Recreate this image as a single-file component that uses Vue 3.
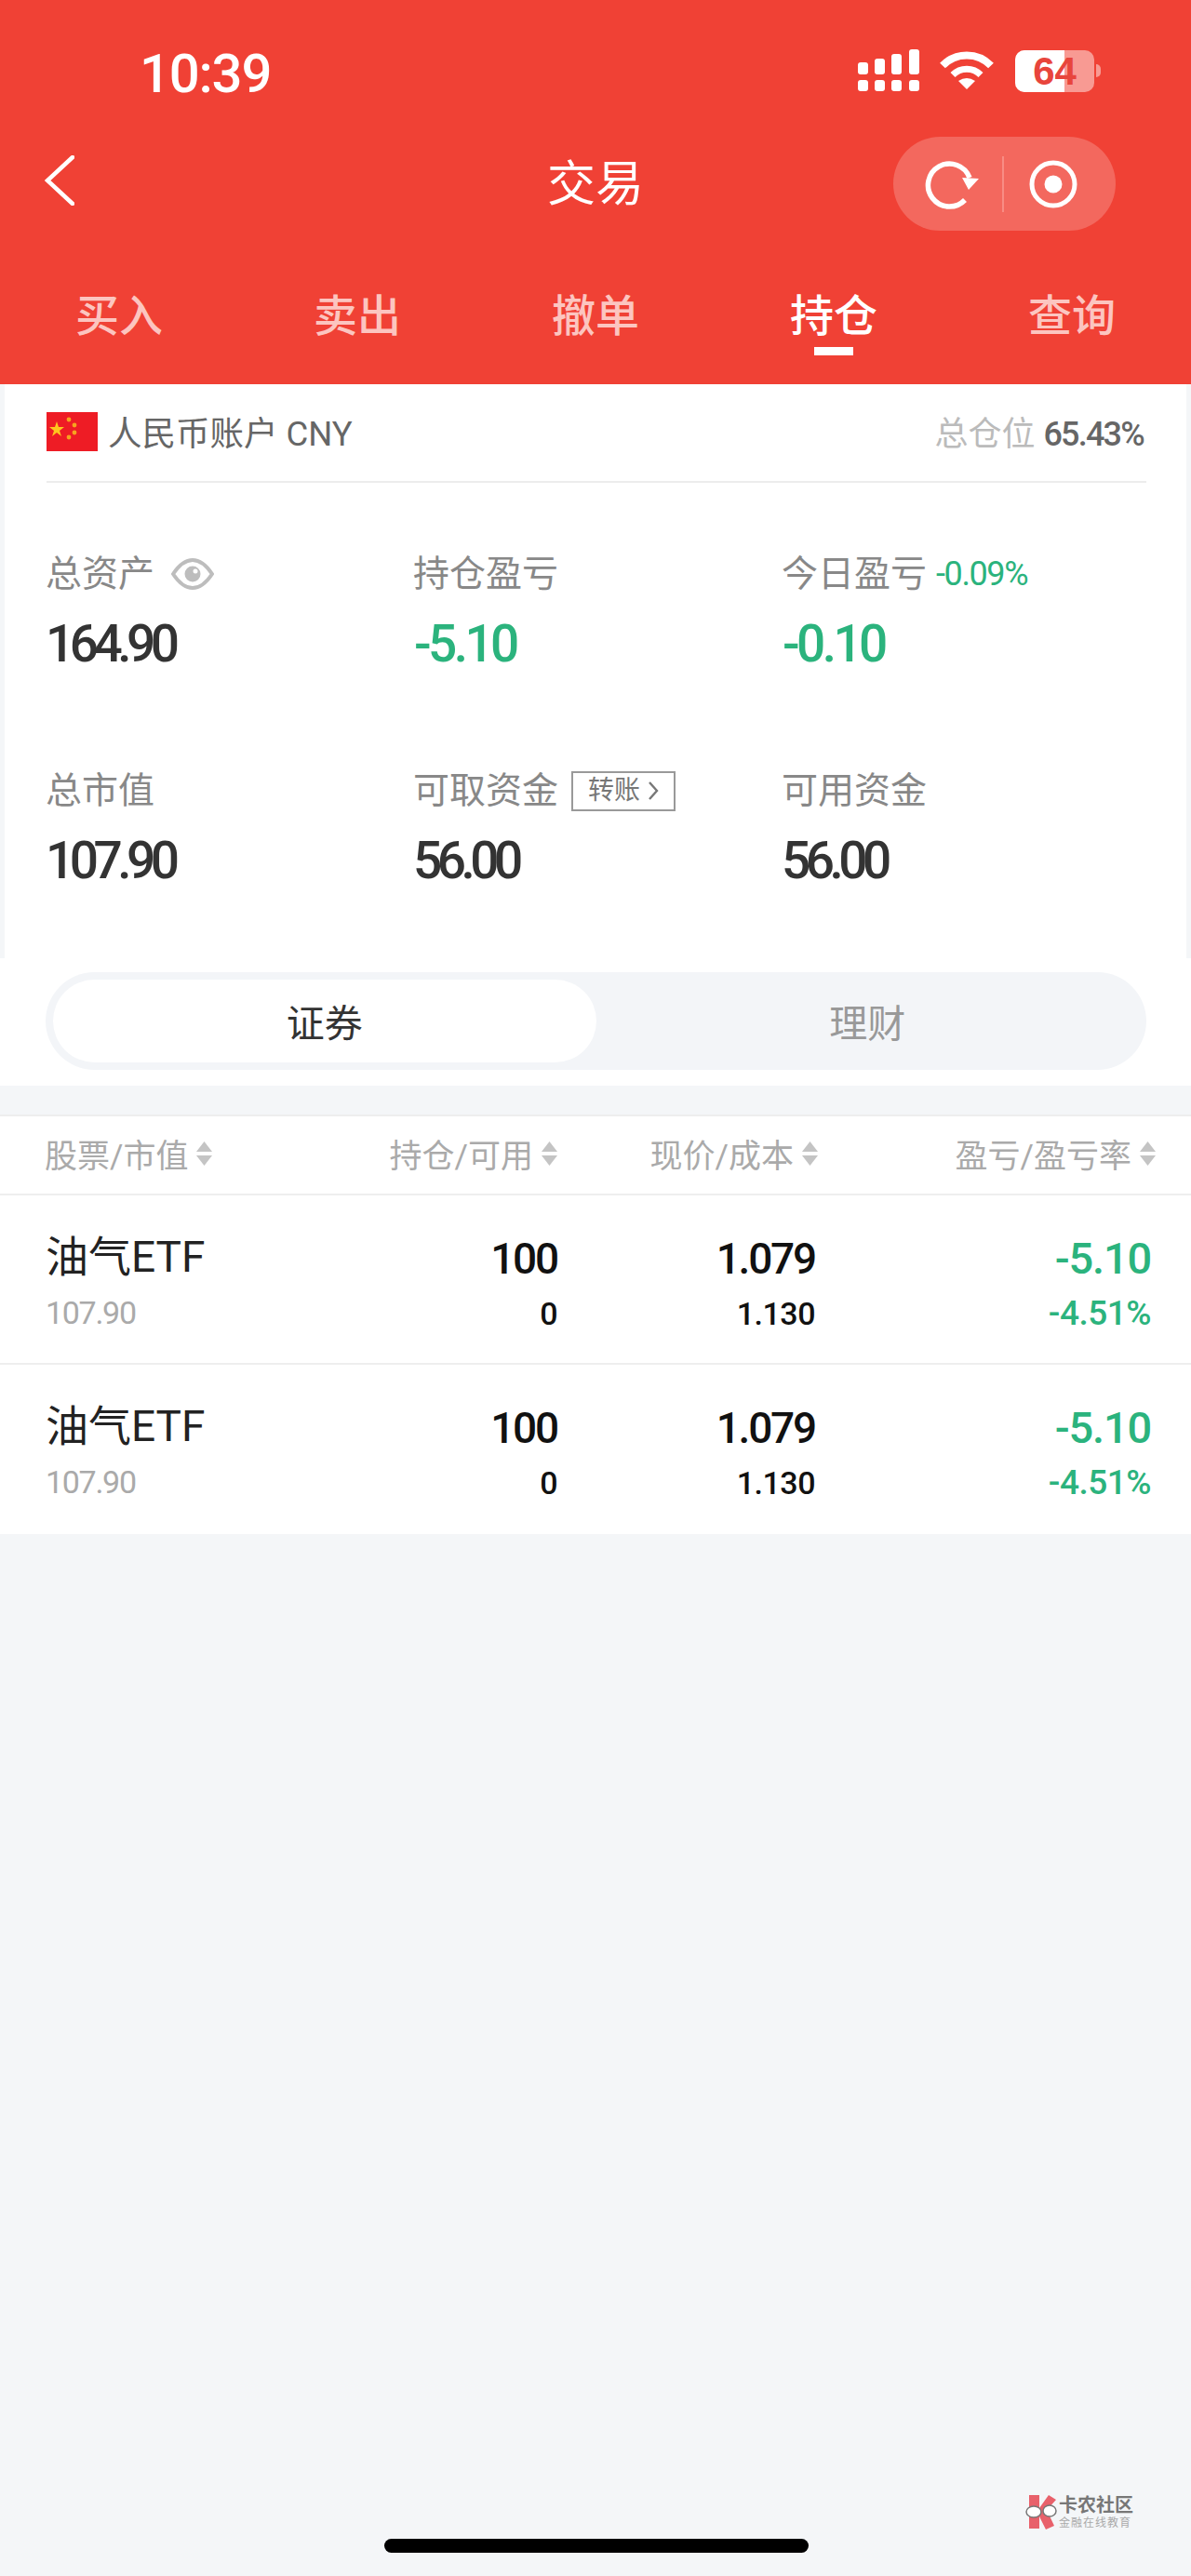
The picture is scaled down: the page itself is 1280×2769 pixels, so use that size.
<script setup>
const tabs = [
  { label: '买入' },
  { label: '卖出' },
  { label: '撤单' },
  { label: '持仓', active: true },
  { label: '查询' },
]
const stats = [
  { label: '总资产', value: '164.90', eye: true },
  { label: '持仓盈亏', value: '-5.10', green: true },
  { label: '今日盈亏', value: '-0.10', green: true, pct: '-0.09%' },
  { label: '总市值', value: '107.90' },
  { label: '可取资金', value: '56.00', transfer: true },
  { label: '可用资金', value: '56.00' },
]
const heads = ['股票/市值', '持仓/可用', '现价/成本', '盈亏/盈亏率']
const rows = [
  { name: '油气ETF', mv: '107.90', qty: '100', avail: '0', price: '1.079', cost: '1.130', pl: '-5.10', rate: '-4.51%' },
  { name: '油气ETF', mv: '107.90', qty: '100', avail: '0', price: '1.079', cost: '1.130', pl: '-5.10', rate: '-4.51%' },
]
</script>

<template>
  <div class="page">
    <header class="head">
      <div class="status">
        <span class="time">10:39</span>
        <div class="status-icons">
          <svg class="signal" width="66" height="46" viewBox="0 0 66 46" fill="#fff">
            <rect x="0" y="14" width="11" height="13" rx="3" />
            <rect x="18" y="10" width="11" height="17" rx="3" />
            <rect x="36" y="5" width="11" height="22" rx="3" />
            <rect x="55" y="0" width="11" height="27" rx="3" />
            <rect x="0" y="33" width="11" height="12" rx="3" />
            <rect x="18" y="33" width="11" height="12" rx="3" />
            <rect x="36" y="33" width="11" height="12" rx="3" />
            <rect x="55" y="33" width="11" height="12" rx="3" />
          </svg>
          <svg class="wifi" width="58" height="42" viewBox="0 0 58 42" fill="none" stroke="#fff">
            <path d="M3 15.5 A36 36 0 0 1 55 15.5" stroke-width="8" />
            <path d="M14 25.5 A21 21 0 0 1 44 25.5" stroke-width="7" />
            <path d="M29 41 L20 32 Q29 26 38 32 Z" fill="#fff" stroke="none" />
          </svg>
          <div class="battery">
            <span class="battery-fill"></span>
            <span class="battery-num">64</span>
          </div>
          <span class="battery-tip"></span>
        </div>
      </div>
      <div class="nav">
        <svg class="back" width="32" height="54" viewBox="0 0 32 54" fill="none" stroke="#fff" stroke-width="4.5" stroke-linecap="round">
          <path d="M30 2 L3 27 L30 52" />
        </svg>
        <span class="title">交易</span>
        <div class="capsule">
          <div class="cap-btn first">
            <svg width="58" height="54" viewBox="0 0 58 54" fill="none" stroke="#fff" stroke-width="5.5">
              <path d="M43 44 A23 23 0 1 1 48 20" />
              <path d="M40 20 L58 21 L47 33 Z" fill="#fff" stroke="none" />
            </svg>
          </div>
          <span class="cap-line"></span>
          <div class="cap-btn last">
            <svg width="54" height="54" viewBox="0 0 54 54" fill="none">
              <circle cx="27" cy="27" r="23" stroke="#fff" stroke-width="5" />
              <circle cx="27" cy="27" r="9.5" fill="#fff" />
            </svg>
          </div>
        </div>
      </div>
      <nav class="tabs">
        <div v-for="t in tabs" :key="t.label" class="tab" :class="{ on: t.active }">
          <span>{{ t.label }}</span>
          <i v-if="t.active" class="tab-bar"></i>
        </div>
      </nav>
    </header>

    <section class="card">
      <div class="account">
        <div class="acc-left">
          <svg class="flag" width="55" height="42" viewBox="0 0 55 42">
            <rect width="55" height="42" fill="#EE1C25" />
            <polygon points="11,10 13,16 19,16 14,20 16,26 11,22 6,26 8,20 3,16 9,16" fill="#FFC61E" />
            <circle cx="24" cy="8" r="2.4" fill="#F7A31E" />
            <circle cx="30" cy="14" r="2.4" fill="#F7A31E" />
            <circle cx="30" cy="22" r="2.4" fill="#F7A31E" />
            <circle cx="24" cy="27" r="2.4" fill="#F7A31E" />
          </svg>
          <span class="acc-name">人民币账户 CNY</span>
        </div>
        <div class="acc-right">总仓位 <b>65.43%</b></div>
      </div>
      <div class="stats">
        <div v-for="s in stats" :key="s.label" class="stat">
          <div class="stat-label">
            <span>{{ s.label }}</span>
            <svg v-if="s.eye" class="eye" width="46" height="36" viewBox="0 0 46 36" fill="none">
              <path d="M2 18 Q12 3 23 3 Q34 3 44 18 Q34 33 23 33 Q12 33 2 18 Z" stroke="#BDBDBD" stroke-width="4" />
              <circle cx="23" cy="18" r="8.5" fill="#BDBDBD" />
              <circle cx="26" cy="15" r="2.5" fill="#fff" />
            </svg>
            <span v-if="s.pct" class="stat-pct">{{ s.pct }}</span>
            <span v-if="s.transfer" class="transfer">
              转账
              <svg width="12" height="22" viewBox="0 0 12 22" fill="none" stroke="#777" stroke-width="2.4">
                <path d="M2 2 L10 11 L2 20" />
              </svg>
            </span>
          </div>
          <div class="stat-value" :class="{ green: s.green }">{{ s.value }}</div>
        </div>
      </div>
    </section>

    <section class="seg-wrap">
      <div class="seg">
        <div class="seg-item active">证券</div>
        <div class="seg-item">理财</div>
      </div>
    </section>

    <section class="table">
      <div class="thead">
        <div v-for="h in heads" :key="h" class="th">
          <span>{{ h }}</span>
          <svg width="19" height="26" viewBox="0 0 19 26" fill="#C4C4C4">
            <path d="M9.5 0 L18 11 H1 Z" />
            <path d="M1 15 H18 L9.5 26 Z" />
          </svg>
        </div>
      </div>
      <div v-for="(r, i) in rows" :key="i" class="tr">
        <div class="td-name">
          <div class="name">{{ r.name }}</div>
          <div class="mv">{{ r.mv }}</div>
        </div>
        <div class="td qty">
          <div class="big">{{ r.qty }}</div>
          <div class="small">{{ r.avail }}</div>
        </div>
        <div class="td price">
          <div class="big">{{ r.price }}</div>
          <div class="small">{{ r.cost }}</div>
        </div>
        <div class="td green">
          <div class="big">{{ r.pl }}</div>
          <div class="small">{{ r.rate }}</div>
        </div>
      </div>
    </section>

    <div class="mark">
      <svg width="34" height="38" viewBox="0 0 34 38">
        <path d="M4 1 H15 V15 L25 1 L33 6 L23 17 L31 34 L22 38 L15 24 V37 H4 Z" fill="#E8616B" />
        <ellipse cx="9" cy="19" rx="8" ry="6" fill="#fff" stroke="#777" stroke-width="1.5" />
        <ellipse cx="26" cy="18" rx="7" ry="6" fill="#fff" stroke="#777" stroke-width="1.5" />
      </svg>
      <div class="mark-text">
        <div class="mark-a">卡农社区</div>
        <div class="mark-b">金融在线教育</div>
      </div>
    </div>
    <div class="home"></div>
  </div>
</template>

<style scoped>
.page {
  position: relative;
  width: 1280px;
  height: 2769px;
  overflow: hidden;
  background: #f4f6f8;
  font-family: Roboto, "Noto Sans CJK SC", sans-serif;
}
.head {
  height: 413px;
  background: #f04135;
  color: #fff;
}
.status {
  display: flex;
  align-items: center;
  justify-content: space-between;
  height: 147px;
  padding: 5px 97px 0 150px;
  box-sizing: border-box;
}
.time {
  position: relative;
  top: 3px;
  font-size: 58px;
  font-weight: 500;
  letter-spacing: -1.2px;
  line-height: 60px;
}
.status-icons {
  display: flex;
  align-items: center;
  position: relative;
}
.wifi {
  margin-left: 22px;
}
.battery {
  position: relative;
  width: 85px;
  height: 45px;
  margin-left: 23px;
  border-radius: 10px;
  overflow: hidden;
  background: #f89a93;
  text-align: center;
}
.battery-fill {
  position: absolute;
  left: 0;
  top: 0;
  bottom: 0;
  width: 53px;
  background: #fff;
}
.battery-num {
  position: relative;
  font-family: "Liberation Sans", sans-serif;
  font-weight: 700;
  font-size: 42px;
  line-height: 45px;
  color: #e8453c;
}
.battery-tip {
  width: 5px;
  height: 14px;
  margin-left: 2px;
  border-radius: 0 6px 6px 0;
  background: #f89a93;
}
.nav {
  position: relative;
  display: flex;
  align-items: center;
  justify-content: center;
  height: 101px;
}
.back {
  position: absolute;
  left: 48px;
  top: 20px;
}
.title {
  padding-top: 3px;
  font-size: 52px;
  line-height: 60px;
}
.capsule {
  position: absolute;
  left: 960px;
  top: 0;
  display: flex;
  align-items: center;
  width: 239px;
  height: 101px;
  border-radius: 51px;
  background: #f3685e;
}
.cap-btn {
  flex: 1;
  display: flex;
  align-items: center;
  justify-content: center;
  box-sizing: border-box;
}
.cap-btn.first {
  padding-left: 10px;
}
.cap-btn.last {
  padding-right: 14px;
}
.cap-line {
  width: 2px;
  height: 60px;
  background: #f88c84;
}
.tabs {
  display: grid;
  grid-template-columns: repeat(5, 1fr);
  padding-top: 67px;
}
.tab {
  display: flex;
  flex-direction: column;
  align-items: center;
  font-size: 47px;
  font-weight: 500;
  line-height: 50px;
  color: #fcc5c0;
}
.tab.on {
  color: #fff;
}
.tab-bar {
  width: 42px;
  height: 9px;
  margin-top: 8px;
  background: #fff;
}
.card {
  margin: 0 5px;
  padding: 0 43px 75px 45px;
  background: #fff;
}
.account {
  display: flex;
  align-items: center;
  justify-content: space-between;
  height: 106px;
  padding-bottom: 4px;
  box-sizing: border-box;
  border-bottom: 2px solid #ececec;
}
.acc-left {
  display: flex;
  align-items: center;
  gap: 11px;
}
.flag {
  margin-top: 2px;
}
.acc-name {
  font-size: 36.5px;
  color: #666;
}
.acc-right {
  position: relative;
  left: -3px;
  font-size: 36px;
  color: #bbb;
}
.acc-right b {
  font-size: 36px;
  font-weight: 500;
  color: #666;
  letter-spacing: -1.8px;
}
.stats {
  display: grid;
  grid-template-columns: 395px 396px 1fr;
  row-gap: 104px;
  padding-top: 74px;
}
.stat-label {
  display: flex;
  align-items: center;
  height: 48px;
  margin-left: -1px;
  font-size: 39px;
  line-height: 48px;
  color: #888;
}
.eye {
  margin-left: 18px;
}
.stat-pct {
  margin-left: 10px;
  font-size: 36px;
  letter-spacing: -1.4px;
  color: #2bb37d;
}
.transfer {
  display: flex;
  align-items: center;
  justify-content: center;
  gap: 8px;
  width: 112px;
  height: 43px;
  margin-left: 14px;
  box-sizing: border-box;
  border: 2px solid #999;
  font-size: 28px;
  line-height: 38px;
  color: #777;
}
.stat-value {
  height: 60px;
  margin-top: 21px;
  margin-left: -1px;
  font-size: 55px;
  line-height: 60px;
  font-weight: 500;
  letter-spacing: -5.5px;
  color: #333;
}
.stat-value.green {
  margin-left: 0;
  letter-spacing: -3.6px;
  color: #2bb37d;
}
.seg-wrap {
  padding: 15px 48px 17px 49px;
  background: #fff;
}
.seg {
  display: flex;
  height: 105px;
  padding: 8px;
  box-sizing: border-box;
  border-radius: 53px;
  background: #f3f5f8;
}
.seg-item {
  flex: 1;
  display: flex;
  align-items: center;
  justify-content: center;
  border-radius: 45px;
  padding-bottom: 2px;
  box-sizing: border-box;
  font-size: 41px;
  color: #999;
}
.seg-item.active {
  background: #fff;
  color: #333;
}
.table {
  margin-top: 31px;
  background: #fff;
}
.thead,
.tr {
  display: grid;
  grid-template-columns: 352px 200px 280px 363px;
  padding-left: 48px;
}
.thead {
  height: 87px;
  align-items: center;
  box-sizing: border-box;
  padding-bottom: 4px;
  border-top: 2px solid #eee;
  border-bottom: 2px solid #eee;
}
.th {
  display: flex;
  align-items: center;
  justify-content: flex-end;
  gap: 8px;
  font-size: 35px;
  color: #aaa;
}
.th:first-child {
  justify-content: flex-start;
}
.tr {
  height: 182px;
  box-sizing: border-box;
  border-bottom: 2px solid #eee;
}
.tr:last-child {
  border-bottom: 0;
}
.td-name {
  padding: 38px 0 0 1px;
}
.name {
  height: 56px;
  font-size: 46px;
  line-height: 56px;
  color: #222;
}
.mv {
  margin-top: 12px;
  font-size: 34px;
  line-height: 40px;
  letter-spacing: -1.3px;
  color: #aaa;
}
.td {
  padding: 40px 3px 0 0;
  text-align: right;
  color: #111;
}
.td.qty {
  padding-right: 1px;
}
.td.price {
  padding-right: 4px;
}
.td.green {
  padding-right: 6px;
  color: #2bb37d;
}
.big {
  font-size: 46px;
  font-weight: 500;
  line-height: 56px;
  letter-spacing: -2.2px;
}
.green .big {
  font-size: 47px;
  letter-spacing: -1.2px;
}
.small {
  margin-top: 9px;
  font-size: 34px;
  font-weight: 500;
  line-height: 44px;
  letter-spacing: -0.5px;
}
.green .small {
  font-size: 37px;
}
.mark {
  position: absolute;
  left: 1102px;
  top: 2681px;
  display: flex;
  align-items: center;
  gap: 2px;
}
.mark-a {
  font-size: 20px;
  line-height: 24px;
  font-weight: 700;
  color: #777;
}
.mark-b {
  font-size: 12px;
  line-height: 14px;
  letter-spacing: 1px;
  color: #aaa;
}
.home {
  position: absolute;
  left: 413px;
  top: 2729px;
  width: 456px;
  height: 15px;
  border-radius: 8px;
  background: #000;
}
</style>

<style>
html,
body {
  background: #f4f6f8;
}
</style>
